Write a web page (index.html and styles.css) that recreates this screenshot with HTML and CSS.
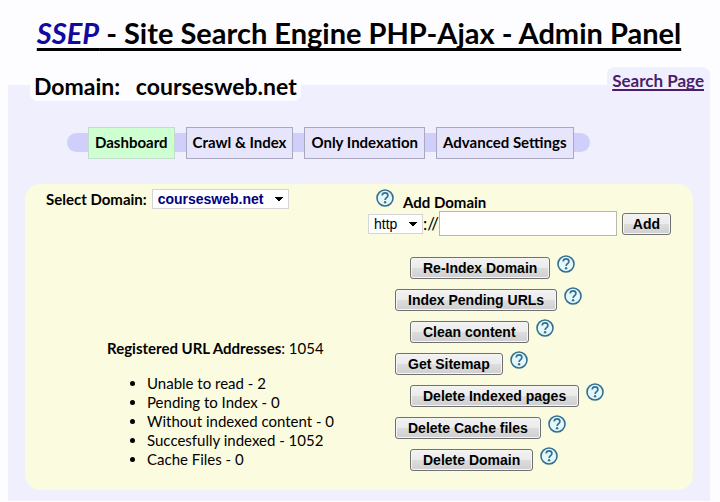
FILE: index.html
```html
<!DOCTYPE html>
<html lang="en">
<head>
    <meta charset="UTF-8">
    <meta name="viewport" content="width=device-width, initial-scale=1.0">
    <title>SSEP - Site Search Engine PHP-Ajax - Admin Panel</title>
    <link rel="stylesheet" href="styles.css">
</head>
<body>
    <svg class="sprite" aria-hidden="true">
        <symbol id="help" viewBox="0 0 18 18">
            <circle cx="9" cy="9" r="8" fill="#e4f8fb" stroke="#36708f" stroke-width="1.6"/>
            <path d="M6.2 6.5C6.3 4.7 7.4 3.9 9 3.9c1.7 0 2.9 1 2.9 2.5 0 2.2-2.8 2.3-2.8 4.6" fill="none" stroke="#36708f" stroke-width="1.7"/>
            <circle cx="9.1" cy="13.3" r="1.2" fill="#36708f"/>
        </symbol>
    </svg>

    <h1><em>SSEP</em> - Site Search Engine PHP-Ajax - Admin Panel</h1>

    <div class="top">
        <h2>Domain: <span>coursesweb.net</span></h2>
        <a class="search-page" href="#">Search Page</a>
    </div>

    <div class="container">
        <nav>
            <a class="active" href="#">Dashboard</a>
            <a href="#">Crawl &amp; Index</a>
            <a href="#">Only Indexation</a>
            <a href="#">Advanced Settings</a>
        </nav>

        <div class="content">
            <div class="left">
                <div class="select-domain">
                    <label for="domain">Select Domain:</label>
                    <select id="domain" name="domain">
                        <option>coursesweb.net</option>
                    </select>
                </div>
                <div class="stats">
                    <p><b>Registered URL Addresses</b>: 1054</p>
                    <ul>
                        <li>Unable to read - 2</li>
                        <li>Pending to Index - 0</li>
                        <li>Without indexed content - 0</li>
                        <li>Succesfully indexed - 1052</li>
                        <li>Cache Files - 0</li>
                    </ul>
                </div>
            </div>

            <div class="right">
                <div class="add-label">
                    <svg class="help"><use href="#help"/></svg>
                    <label for="newdomain">Add Domain</label>
                </div>
                <form class="add-form">
                    <select name="protocol" aria-label="Protocol">
                        <option>http</option>
                        <option>https</option>
                    </select>
                    <span>://</span>
                    <input type="text" id="newdomain" name="newdomain">
                    <button type="button">Add</button>
                </form>
                <div class="actions">
                    <div><button type="button">Re-Index Domain</button><svg class="help"><use href="#help"/></svg></div>
                    <div><button type="button">Index Pending URLs</button><svg class="help"><use href="#help"/></svg></div>
                    <div><button type="button">Clean content</button><svg class="help"><use href="#help"/></svg></div>
                    <div><button type="button">Get Sitemap</button><svg class="help"><use href="#help"/></svg></div>
                    <div><button type="button">Delete Indexed pages</button><svg class="help"><use href="#help"/></svg></div>
                    <div><button type="button">Delete Cache files</button><svg class="help"><use href="#help"/></svg></div>
                    <div><button type="button">Delete Domain</button><svg class="help"><use href="#help"/></svg></div>
                </div>
            </div>
        </div>
    </div>
</body>
</html>
```
FILE: styles.css
```css
* {
    box-sizing: border-box;
}
body {
    font-family: Lato, sans-serif;
    font-size: 15px;
    line-height: 19px;
    margin: 0;
    padding: 0 10px 0 8px;
    background-color: #fdfdff;
    color: #000;
}
.sprite {
    display: none;
}
h1 {
    margin: 0;
    padding-top: 15px;
    font-size: 29px;
    line-height: 36px;
    text-align: center;
    text-decoration: underline;
    text-decoration-thickness: 3px;
    text-underline-offset: 4px;
    text-decoration-skip-ink: none;
    white-space: nowrap;
}
h1 em {
    color: #1209a0;
}

/* both labels hang over the top edge of the panel */
.top {
    position: relative;
    display: flex;
    justify-content: space-between;
    align-items: flex-start;
    margin-top: 16px;
    padding-left: 22px;
}
.top h2 {
    margin: 4px 0 0;
    padding: 0 4px;
    font-size: 23px;
    line-height: 30px;
    background-color: #fdfdff;
    border-radius: 8px;
}
.top h2 span {
    margin-left: 10px;
}
.search-page {
    padding: 3px 6px 5px 5px;
    font-size: 17px;
    line-height: 22px;
    font-weight: bold;
    color: #4b1d6b;
    background-color: #efeffd;
    border-radius: 8px;
    text-decoration-thickness: 2px;
    text-underline-offset: 2px;
    text-decoration-skip-ink: none;
}

.container {
    margin-top: -16px;
    padding: 48px 17px 11px;
    background-color: #efeffd;
}
nav {
    display: flex;
    align-items: center;
    gap: 11px;
    width: fit-content;
    height: 19px;
    margin-left: 42px;
    padding: 0 16px 0 21px;
    background-color: #d0cefa;
    border-radius: 10px;
}
nav a {
    padding: 5px 6px 6px;
    border: 1px solid #a9a8c0;
    background-color: #e7e5fc;
    color: #000;
    font-weight: bold;
    text-decoration: none;
    white-space: nowrap;
}
nav a.active {
    background-color: #ceffd0;
    border-color: #c4dccb;
}

.content {
    display: grid;
    grid-template-columns: minmax(0, 343fr) minmax(0, 325fr);
    margin-top: 32px;
    padding: 5px 0 19px;
    background-color: #fbfbe0;
    border-radius: 15px;
}
.left {
    display: flex;
    flex-direction: column;
    justify-content: space-between;
    padding: 0 0 2px 21px;
}
.select-domain {
    display: flex;
    align-items: center;
    gap: 5px;
    font-weight: bold;
}
select {
    appearance: none;
    height: 20px;
    padding: 0 24px 0 5px;
    border: 1px solid #d5d5d5;
    border-radius: 0;
    background-color: #fff;
    background-image: conic-gradient(from -45deg at 50% 100%, #000 90deg, transparent 0);
    background-position: right 5px center;
    background-size: 8px 4px;
    background-repeat: no-repeat;
    font-family: "Liberation Sans", Arial, sans-serif;
    font-size: 14px;
    color: #000;
}
#domain {
    color: #000080;
    font-weight: bold;
}
.stats {
    padding-left: 61px;
}
.stats p {
    margin: 0 0 16px;
}
.stats ul {
    margin: 0;
    padding-left: 40px;
}

.add-label {
    display: flex;
    gap: 9px;
    height: 22px;
    padding-left: 8px;
    font-weight: bold;
}
.add-label label {
    padding-top: 4px;
}
.help {
    width: 18px;
    height: 18px;
    flex: none;
}
.add-form {
    display: flex;
    align-items: center;
    padding-right: 22px;
}
.add-form select {
    width: 55px;
}
.add-form span {
    font-size: 17px;
}
.add-form input {
    flex: 1;
    min-width: 0;
    height: 25px;
    margin-right: 5px;
    border: 1px solid #b8b8b0;
    background-color: #fff;
}
button {
    height: 22px;
    padding: 0 12px;
    border: 1px solid #707070;
    border-radius: 3px;
    background: linear-gradient(#f2f2f2 0%, #ebebeb 50%, #dddddd 50%, #cfcfcf 100%);
    box-shadow: inset 0 0 0 1px #f6f6f6;
    font-family: "Liberation Sans", Arial, sans-serif;
    font-size: 14px;
    font-weight: bold;
    color: #000;
    white-space: nowrap;
}
.add-form button {
    padding: 0 10px;
}
.actions {
    display: flex;
    flex-direction: column;
    gap: 8px;
    margin-top: 19px;
    padding-left: 27px;
}
.actions div {
    display: flex;
    gap: 7px;
    height: 24px;
}
.actions div:nth-child(odd) {
    padding-left: 15px;
}
.actions button {
    margin-top: 2px;
}
```
